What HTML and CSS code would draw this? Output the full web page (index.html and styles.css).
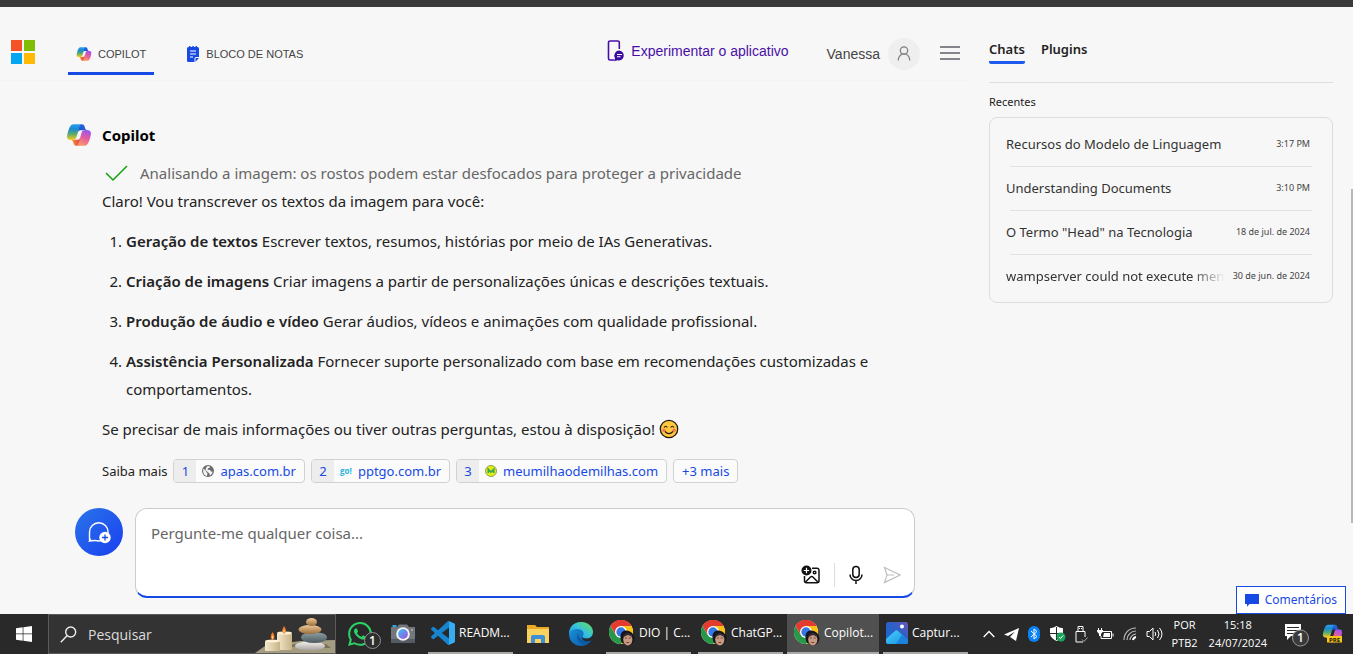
FILE: index.html
```html
<!DOCTYPE html>
<html lang="pt-BR">
<head>
<meta charset="utf-8">
<title>Copilot</title>
<link rel="stylesheet" href="styles.css">
</head>
<body>
<svg class="defs" aria-hidden="true">
  <defs>
    <linearGradient id="cpA" x1="0" y1="0" x2="0" y2="1"><stop offset="0" stop-color="#2b9ff5"/><stop offset=".3" stop-color="#1a8ad0"/><stop offset=".6" stop-color="#52a878"/><stop offset="1" stop-color="#f5cb1c"/></linearGradient>
    <linearGradient id="cpB" x1=".7" y1="0" x2=".3" y2="1"><stop offset="0" stop-color="#9a55f0"/><stop offset=".45" stop-color="#e45ba0"/><stop offset="1" stop-color="#ff9a68"/></linearGradient>
    <linearGradient id="cpC" x1="0" y1="1" x2="1" y2="0"><stop offset="0" stop-color="#1746c8"/><stop offset="1" stop-color="#2b74e8"/></linearGradient>
    <linearGradient id="cpD" x1="0" y1="0" x2="1" y2="0"><stop offset="0" stop-color="#ff9d3c"/><stop offset="1" stop-color="#e0433a"/></linearGradient>
    <linearGradient id="edgeA" x1="0" y1="1" x2="1" y2="0"><stop offset="0" stop-color="#1d86d8"/><stop offset=".5" stop-color="#35c1e0"/><stop offset="1" stop-color="#67e04c"/></linearGradient>
    <linearGradient id="edgeB" x1="0" y1="0" x2="1" y2="1"><stop offset="0" stop-color="#1b9de2"/><stop offset="1" stop-color="#0b4fa0"/></linearGradient>
    <linearGradient id="photoA" x1="0" y1="1" x2="1" y2="0"><stop offset="0" stop-color="#1769d8"/><stop offset=".6" stop-color="#2f5fc4"/><stop offset="1" stop-color="#6a55b8"/></linearGradient>
    <linearGradient id="photoB" x1="0" y1="0" x2="1" y2="1"><stop offset="0" stop-color="#4fd0fb"/><stop offset="1" stop-color="#0f8fe0"/></linearGradient>
    <linearGradient id="lens" x1="0" y1="0" x2="1" y2="1"><stop offset="0" stop-color="#38c3f2"/><stop offset="1" stop-color="#a24be0"/></linearGradient>
    <linearGradient id="wax" x1="0" y1="0" x2="1" y2="0"><stop offset="0" stop-color="#f5e8cc"/><stop offset="1" stop-color="#c8b489"/></linearGradient>
    <linearGradient id="stoneA" x1="0" y1="0" x2="0" y2="1"><stop offset="0" stop-color="#f0c896"/><stop offset="1" stop-color="#9a6f3c"/></linearGradient>
    <linearGradient id="stoneB" x1="0" y1="0" x2="0" y2="1"><stop offset="0" stop-color="#8fa0a4"/><stop offset="1" stop-color="#4c5a5e"/></linearGradient>
    <linearGradient id="stoneC" x1="0" y1="0" x2="0" y2="1"><stop offset="0" stop-color="#f4f2f0"/><stop offset="1" stop-color="#a5a19c"/></linearGradient>
  </defs>
  <symbol id="copilot" viewBox="0 0 48 48">
    <path fill="url(#cpC)" d="M34.142 7.325A4.63 4.63 0 0 0 29.7 4h-1.35a4.63 4.63 0 0 0-4.554 3.794L21.48 20.407l.575-1.965a4.63 4.63 0 0 1 4.444-3.33h7.853l3.294 1.282 3.175-1.283h-.926a4.63 4.63 0 0 1-4.443-3.325z"/>
    <path fill="url(#cpD)" d="M14.33 40.656A4.63 4.63 0 0 0 18.779 44h2.87a4.63 4.63 0 0 0 4.629-4.51l.312-12.163-.654 2.233a4.63 4.63 0 0 1-4.443 3.329h-7.919l-2.823-1.532-3.057 1.532h.912a4.63 4.63 0 0 1 4.447 3.344z"/>
    <path fill="url(#cpA)" d="M29.5 4H13.46c-4.583 0-7.332 6.057-9.165 12.113C2.123 23.29-.72 32.885 7.503 32.885h6.925a4.63 4.63 0 0 0 4.456-3.358 2078 2078 0 0 1 4.971-17.156c.843-2.843 1.544-5.284 2.621-6.805C27.08 4.714 28.086 4 29.5 4z"/>
    <path fill="url(#cpB)" d="M18.498 44h16.04c4.582 0 7.332-6.058 9.165-12.115 2.171-7.177 5.013-16.775-3.208-16.775h-6.926a4.63 4.63 0 0 0-4.455 3.358 2084 2084 0 0 1-4.972 17.16c-.842 2.843-1.544 5.285-2.62 6.806-.604.852-1.61 1.566-3.024 1.566z"/>
  </symbol>
  <symbol id="chrome" viewBox="0 0 26 26">
    <circle cx="12" cy="12" r="12" fill="#fff"/>
    <path fill="#e33b2e" d="M12 12 1.6 6A12 12 0 0 1 22.4 6z"/>
    <path fill="#fbc116" d="M22.4 6A12 12 0 0 1 12 24l5.2-9L12 6z"/>
    <path fill="#279847" d="M1.6 6A12 12 0 0 0 12 24l5.2-9H6.8z"/>
    <path fill="#e33b2e" d="M12 6h10.4A12 12 0 0 0 1.6 6l5.2 9z"/>
    <circle cx="12" cy="12" r="6" fill="#fff"/><circle cx="12" cy="12" r="4.7" fill="#3577e5"/>
    <path fill="#17151c" d="M13 23c-2-4-3-11 3-12.500 6-.5 9 4 9.500 8-.5 4-3 7-7 7z"/>
    <ellipse cx="18.800" cy="19.500" rx="4.600" ry="6" fill="#c99a82"/>
    <path d="M15.900 18h2M19.700 18h2M17.300 22.500h3" stroke="#5b3430" stroke-width=".8"/>
    <path d="M14 18c0-3 2-5 4.500-5 3 1 4 2 4.500 5-1-2-2-2.500-4-3-2 .5-3.500 1-5 3z" fill="#302932"/>
  </symbol>
</svg>

<div class="window-edge"></div>
<div class="page">
  <main class="main">
    <header class="header">
      <a class="ms-logo" href="#" aria-label="Microsoft"><i class="red"></i><i class="green"></i><i class="blue"></i><i class="yellow"></i></a>
      <nav class="nav">
        <a class="nav-item nav-active" href="#"><svg width="16" height="16"><use href="#copilot"/></svg>COPILOT</a>
        <a class="nav-item" href="#"><svg width="14" height="16" viewBox="0 0 14 16"><path fill="#174ae4" d="M2.500 1H3V0h1.500v1h1.800V0h1.500v1h1.800V0H11v1h.5A1.500 1.500 0 0 1 13 2.500V11H10a1.500 1.500 0 0 0-1.500 1.500V16h-6A1.500 1.500 0 0 1 1 14.500v-12A1.500 1.500 0 0 1 2.500 1zM9.500 12.500 10 12h3l-3.500 3.800z"/><path stroke="#fff" stroke-width="1.200" d="M4 5h6M4 8h6M4 11h3"/></svg>BLOCO DE NOTAS</a>
      </nav>
      <a class="try-app" href="#"><svg width="18" height="22" viewBox="0 0 18 22"><path d="M12.300 9V2.500A1.500 1.500 0 0 0 10.800 1H3a1.500 1.500 0 0 0-1.500 1.500v16A1.500 1.500 0 0 0 3 20h4" fill="none" stroke="#4a0fa8" stroke-width="1.600"/><path fill="#3a0ca0" d="M12.400 10.500a5 5 0 1 1-1.900 9.800L7 21.300l1-3.300a5 5 0 0 1 4.400-7.500z"/><path stroke="#fff" stroke-width="1.100" d="M10 14.500h5M10 16.800h3.500"/></svg>Experimentar o aplicativo</a>
      <button class="account" type="button">Vanessa<span class="avatar"><svg width="14" height="15" viewBox="0 0 14 15" fill="none" stroke="#7c7c80" stroke-width="1.200"><circle cx="7" cy="4.500" r="3.700"/><path d="M1.200 14.500C1.400 10.600 3.700 8.800 5 8l4 0c1.500.8 3.600 2.800 3.800 6.500"/></svg></span></button>
      <button class="menu" type="button" aria-label="Menu"><i></i><i></i><i></i></button>
    </header>

    <section class="chat">
      <h1 class="author"><svg width="26" height="26"><use href="#copilot"/></svg>Copilot</h1>
      <div class="message">
        <p class="status"><svg width="24" height="18" viewBox="0 0 24 18"><path d="m2 9 7 7L23 2" fill="none" stroke="#13a10e" stroke-width="1.500"/></svg>Analisando a imagem: os rostos podem estar desfocados para proteger a privacidade</p>
        <p>Claro! Vou transcrever os textos da imagem para você:</p>
        <ol class="answer-list">
          <li><strong>Geração de textos</strong> Escrever textos, resumos, histórias por meio de IAs Generativas.</li>
          <li><strong>Criação de imagens</strong> Criar imagens a partir de personalizações únicas e descrições textuais.</li>
          <li><strong>Produção de áudio e vídeo</strong> Gerar áudios, vídeos e animações com qualidade profissional.</li>
          <li><strong>Assistência Personalizada</strong> Fornecer suporte personalizado com base em recomendações customizadas e comportamentos.</li>
        </ol>
        <p>Se precisar de mais informações ou tiver outras perguntas, estou à disposição! <svg class="emoji" width="20" height="20" viewBox="0 0 20 20"><circle cx="10" cy="10" r="8.700" fill="#ffc83d" stroke="#201a10" stroke-width="1.300"/><circle cx="4.900" cy="11.300" r="1.700" fill="#f07a4a"/><circle cx="15.100" cy="11.300" r="1.700" fill="#f07a4a"/><path d="M5 8.500q1.700-2.500 3.400 0M11.600 8.500q1.700-2.500 3.400 0M6 12.500q4 4.200 8 0" fill="none" stroke="#201a10" stroke-width="1.200"/></svg></p>
        <div class="sources">
          <span>Saiba mais</span>
          <a class="source" href="#"><b class="num">1</b><svg width="12" height="12" viewBox="0 0 12 12"><circle cx="6" cy="6" r="6" fill="#6b6b6f"/><path fill="#f5f5f5" d="M1.300 3.500 4 6v1l1.500 1-.5 3C2 10.700.8 8 1.300 3.500zM5.500 1l2 .2.500 1.300-2 .8-.5 1.400L8 5l1 1.500 1.700.3C10 9 9 10.300 7.800 10.600L7.500 8.500 5 6.500 3.500 5 4 3z"/></svg><span>apas.com.br</span></a>
          <a class="source" href="#"><b class="num">2</b><i class="go">go!</i><span>pptgo.com.br</span></a>
          <a class="source" href="#"><b class="num">3</b><svg width="12" height="12" viewBox="0 0 12 12"><circle cx="6" cy="6" r="5.500" fill="#e2ee14" stroke="#93a24c"/><path d="M3.300 8V4.300L6 7l2.700-2.700V8" fill="none" stroke="#35a853" stroke-width="1.700"/></svg><span>meumilhaodemilhas.com</span></a>
          <button class="source more" type="button">+3 mais</button>
        </div>
      </div>

      <form class="composer">
        <button class="new-topic" type="button" aria-label="Novo tópico"><svg width="24" height="24" viewBox="0 0 24 24"><path d="M2.500 20.500V12a9.300 9.300 0 1 1 18.600 0c0 5-4 9-9 9-3.600-.8-5.500-.7-9.600 0l1.200-2.500" fill="none" stroke="#fff" stroke-width="1.400"/><circle cx="18" cy="17.500" r="5.700" fill="#fff"/><path d="M18 14.500v6M15 17.500h6" stroke="#174ae4" stroke-width="1.300"/></svg></button>
        <div class="box">
          <textarea class="prompt" aria-label="Mensagem" placeholder="Pergunte-me qualquer coisa..."></textarea>
          <div class="tools">
            <button type="button" aria-label="Adicionar imagem"><svg width="20" height="20" viewBox="0 0 20 20" fill="none" stroke="#111" stroke-width="1.500"><path d="M11 3.200h5A2 2 0 0 1 18 5.200v10.600a2 2 0 0 1-2 2H5.500a2 2 0 0 1-2-2V11"/><path d="m4.500 17 5-5q1.200-1 2.400 0l5 5"/><circle cx="13.600" cy="7.500" r="1.300"/><circle cx="5.500" cy="5.500" r="5" fill="#111" stroke="none"/><path d="M5.500 2.800v5.400M2.800 5.500h5.400" stroke="#fff" stroke-width="1.200"/></svg></button>
            <span class="rule"></span>
            <button type="button" aria-label="Usar microfone"><svg width="16" height="20" viewBox="0 0 16 20" fill="none" stroke="#111" stroke-width="1.500"><rect x="4.800" y="1.500" width="6.400" height="11" rx="3.200"/><path d="M2 9.500a6 6 0 0 0 12 0M8 15.500V19"/></svg></button>
            <button type="submit" aria-label="Enviar"><svg width="18" height="18" viewBox="0 0 18 18" fill="none" stroke="#bdbdbd" stroke-width="1.200"><path d="m1.500 1.500 15.500 7.500L1.500 16.500 4 9zM4 9h7"/></svg></button>
          </div>
        </div>
      </form>
    </section>
  </main>

  <aside class="side">
    <nav class="tabs"><a class="tab tab-active" href="#">Chats</a><a class="tab" href="#">Plugins</a></nav>
    <h2 class="recent-title">Recentes</h2>
    <ul class="recent">
      <li><a href="#"><span>Recursos do Modelo de Linguagem</span><time>3:17 PM</time></a></li>
      <li><a href="#"><span>Understanding Documents</span><time>3:10 PM</time></a></li>
      <li><a href="#"><span>O Termo "Head" na Tecnologia</span><time>18 de jul. de 2024</time></a></li>
      <li><a href="#"><span class="fade">wampserver could not execute men</span><time>30 de jun. de 2024</time></a></li>
    </ul>
  </aside>
  <button class="feedback" type="button"><svg width="14" height="13" viewBox="0 0 14 13"><path fill="#174ae4" d="M0 0h14v10H4.500L2 12.800V10H0z"/></svg>Comentários</button>
  <div class="scroll-thumb"></div>
</div>

<footer class="taskbar">
  <button class="start" type="button" aria-label="Iniciar"><svg width="16" height="16" viewBox="0 0 16 16" fill="#fff"><path d="M0 2.200 6.700 1.300v6.300H0zM7.400 1.200 16 0v7.600H7.400zM0 8.300h6.700v6.400L0 13.800zM7.400 8.300H16V16l-8.600-1.200z"/></svg></button>
  <label class="search">
    <svg width="17" height="17" viewBox="0 0 17 17" fill="none" stroke="#eee" stroke-width="1.400"><circle cx="10.700" cy="6" r="5"/><path d="M7 9.800.8 16.200"/></svg>
    <input type="text" placeholder="Pesquisar">
    <svg width="80" height="38" viewBox="0 0 80 38">
      <path fill="#a39c80" d="M0 38 10 31l35-5 35-1v13z"/><path fill="#5d5743" d="M22 34q16-4 34-1l20 0-5-4H40z" opacity=".6"/>
      <rect x="22" y="18" width="15" height="17" rx="1" fill="url(#wax)"/><ellipse cx="29.500" cy="18" rx="7.500" ry="1.600" fill="#fff1d6"/>
      <rect x="10" y="26" width="15" height="10" rx="1" fill="url(#wax)"/><ellipse cx="17.500" cy="26" rx="7.500" ry="1.500" fill="#fff1d6"/>
      <path fill="#f47a25" d="M29 11q4 5 0 8-3.500-3 0-8zM17.500 17q4 5 0 8-3.500-3 0-8z"/><path fill="#ffd38a" d="M29 14q1.500 3 0 4-1.500-1 0-4zM17.500 20q1.500 3 0 4-1.500-1 0-4z"/>
      <ellipse cx="55" cy="31" rx="15" ry="4.500" fill="url(#stoneC)"/><ellipse cx="59" cy="22.500" rx="13" ry="5.500" fill="url(#stoneB)"/><ellipse cx="55" cy="14.500" rx="11.500" ry="4.500" fill="url(#stoneA)"/><ellipse cx="56.500" cy="7" rx="5.500" ry="4" fill="url(#stoneA)"/>
    </svg>
  </label>
  <div class="apps">
    <button class="app badged" type="button" aria-label="WhatsApp"><svg width="34" height="30" viewBox="0 0 34 30"><path fill="#2bd366" transform="translate(0 3)" d="M17.472 14.382c-.297-.149-1.758-.867-2.030-.967-.273-.099-.471-.148-.67.15-.197.297-.767.966-.94 1.164-.173.199-.347.223-.644.075-.297-.15-1.255-.463-2.390-1.475-.883-.788-1.480-1.761-1.653-2.059-.173-.297-.018-.458.13-.606.134-.133.298-.347.446-.52.149-.174.198-.298.298-.497.099-.198.05-.371-.025-.52-.075-.149-.669-1.612-.916-2.207-.242-.579-.487-.5-.669-.51-.173-.008-.371-.01-.57-.01-.198 0-.52.074-.792.372-.272.297-1.040 1.016-1.040 2.479 0 1.462 1.065 2.875 1.213 3.074.149.198 2.096 3.200 5.077 4.487.709.306 1.262.489 1.694.625.712.227 1.360.195 1.871.118.571-.085 1.758-.719 2.006-1.413.248-.694.248-1.289.173-1.413-.074-.124-.272-.198-.57-.347m-5.421 7.403h-.004a9.870 9.870 0 01-5.031-1.378l-.361-.214-3.741.982.998-3.648-.235-.374a9.860 9.860 0 01-1.510-5.260c.001-5.450 4.436-9.884 9.888-9.884 2.640 0 5.122 1.030 6.988 2.898a9.825 9.825 0 012.893 6.994c-.003 5.450-4.437 9.884-9.885 9.884m8.413-18.297A11.815 11.815 0 0012.050 0C5.495 0 .16 5.335.157 11.892c0 2.096.547 4.142 1.588 5.945L.057 24l6.305-1.654a11.882 11.882 0 005.683 1.448h.005c6.554 0 11.890-5.335 11.893-11.893a11.821 11.821 0 00-3.480-8.413z"/><circle cx="24.500" cy="21.500" r="8" fill="#2e2e2e" stroke="#8d8d8d"/><text class="badge" x="24.500" y="26" text-anchor="middle">1</text></svg></button>
    <button class="app" type="button" aria-label="Câmera"><svg width="24" height="20" viewBox="0 0 24 20"><path fill="#72777d" d="M0 3h6l2-2.500h8L18 3h6v16H0z"/><path fill="#555b62" d="M0 15h24v4H0z"/><path fill="#28a8ea" d="M1.500 1h4v2h-4z"/><circle cx="12" cy="10" r="6.800" fill="#f5f5f5"/><circle cx="12" cy="10" r="4.900" fill="url(#lens)"/><circle cx="21" cy="6" r=".8" fill="#ddd"/></svg></button>
    <button class="app wide open" type="button"><svg width="24" height="24" viewBox="0 0 24 24"><path fill="#1684cf" d="M23.150 2.587L18.210.21a1.494 1.494 0 0 0-1.705.29l-9.460 8.630-4.120-3.128a.999.999 0 0 0-1.276.057L.327 7.261A1 1 0 0 0 .326 8.740L3.899 12 .326 15.260a1 1 0 0 0 .001 1.479L1.650 17.940a.999.999 0 0 0 1.276.057l4.120-3.128 9.460 8.630a1.492 1.492 0 0 0 1.704.29l4.942-2.377A1.500 1.500 0 0 0 24 20.060V3.939a1.500 1.500 0 0 0-.85-1.352zm-5.146 14.861L10.826 12l7.178-5.448v10.896z"/><path fill="#35adf0" d="m18 .3 5.200 2.300q.8.500.8 1.400v16q0 1-.8 1.400L18 23.700z"/></svg><span>READM...</span></button>
    <button class="app" type="button" aria-label="Explorador de Arquivos"><svg width="22" height="20" viewBox="0 0 22 20"><path fill="#e9a825" d="M0 1h8l2 2h12v6H0z"/><path fill="#fbd260" d="M0 5h22v14H0z"/><path fill="#3d8fd6" d="M4 19v-6q0-2 2-2h10q2 0 2 2v6h-4v-4H8v4z"/></svg></button>
    <button class="app" type="button" aria-label="Edge"><svg width="24" height="24" viewBox="0 0 24 24"><circle cx="12" cy="12" r="12" fill="url(#edgeB)"/><path fill="url(#edgeA)" d="M0 12C0 4 6 0 12 0c7 0 12 4.500 12 10 0 4-3 6.500-6.500 6.500-3 0-5-1.200-3.500-3 1.800-2.500-.5-6.500-5-6.500C4.500 7 1 9 0 12z"/><path fill="#0c59a4" d="M9 11c-3 6 2 12 9 11 2-.8 3.500-2 4.500-4-5 2.500-13 1-13.500-7z"/><path fill="#292929" d="M24 10.500c0 4-3 6-6.500 6-3 0-5-1.200-3.500-3-2 2.500 0 5.800 4 5.800 2 0 3.500-.6 4.700-1.300L24 18z"/></svg></button>
    <button class="app wide open" type="button"><svg width="26" height="26"><use href="#chrome"/></svg><span>DIO | C...</span></button>
    <button class="app wide open" type="button"><svg width="26" height="26"><use href="#chrome"/></svg><span>ChatGP...</span></button>
    <button class="app wide open current" type="button"><svg width="26" height="26"><use href="#chrome"/></svg><span>Copilot...</span></button>
    <button class="app wide open" type="button"><svg width="22" height="22" viewBox="0 0 22 22"><rect width="22" height="22" rx="2.500" fill="url(#photoA)"/><path fill="url(#photoB)" d="m0 17 9-8q1.500-1.300 3 0l10 9v1.500q0 2.500-2.500 2.500h-17Q0 22 0 19.500z"/><path fill="#1c83dc" d="m10 22 6-9 6 5v2q0 2-2 2z"/><circle cx="16" cy="4.500" r="2" fill="#fff"/></svg><span>Captur...</span></button>
  </div>
  <div class="tray">
    <svg width="12" height="8" viewBox="0 0 12 8"><path d="m.7 7 5.300-5.500L11.300 7" fill="none" stroke="#fff" stroke-width="1.300"/></svg>
    <svg width="15" height="13" viewBox="0 0 15 13"><path fill="#fff" d="M15 0 0 6.500l4 1.500 7-4.500L6 9l6 4z"/></svg>
    <svg width="12" height="16" viewBox="0 0 12 16"><rect width="12" height="16" rx="6" fill="#0a82f5"/><path d="m3 5 6 5.500L6 13V3l3 2.500L3 11" fill="none" stroke="#fff"/></svg>
    <svg width="17" height="16" viewBox="0 0 17 16"><path fill="#fff" d="M7.500 0Q10 2 14 2.300V8q-1.500 4.500-6.500 7Q1.500 12 1 8V2.300Q5 2 7.500 0z"/><path stroke="#292929" d="M7.500 1v13M1 7.500h13"/><circle cx="12" cy="11" r="4.500" fill="#19a35b"/><path d="m10 11 1.500 1.500 2.700-3" fill="none" stroke="#fff"/></svg>
    <svg width="13" height="17" viewBox="0 0 13 17" fill="none" stroke="#fff"><path d="M3 5.500v-5h5v5M8 16H1V5.500h9V11M4.500 2v1M6.500 2v1"/><path d="m7 13.500 2 2 3.500-4" stroke="#aaa"/></svg>
    <svg width="17" height="13" viewBox="0 0 17 13"><path d="M5.500 3.500h9v7H4V8" fill="none" stroke="#fff"/><path fill="#fff" d="M7 5h6v4H6zM15.500 5.500h1v3h-1zM1 0h1v2H1zM4 0h1v2H4zM0 2h6v1.500L4 6v2H2V6L0 3.500z"/></svg>
    <svg width="14" height="14" viewBox="0 0 14 14" fill="none" stroke="#bbb" stroke-width="1.200"><path d="M1 13C1 6 6 1 13 1M4 13c0-5 4-9 9-9M7 13c0-3 3-6 6-6"/><path d="M10 13q.5-2.500 3-3" stroke="#fff" stroke-width="2"/></svg>
    <svg width="17" height="14" viewBox="0 0 17 14" fill="none" stroke="#fff"><path d="M1 4.500h2.500L7 1v12L3.500 9.500H1zM9 5q1.500 2 0 4M11.500 3q3 4 0 8M13.500 1q5 6 0 12"/></svg>
    <div class="stack lang"><span>POR</span><span>PTB2</span></div>
    <div class="stack clock"><span>15:18</span><span>24/07/2024</span></div>
    <svg class="notice" width="26" height="26" viewBox="0 0 26 26"><path fill="#fff" d="M1 3h16v12H7l-4 4v-4H1z"/><path stroke="#292929" d="M3 6.500h12M3 9.500h12M3 12.500h9"/><circle cx="16.500" cy="17" r="8" fill="#3a3a3a" stroke="#999"/><text class="badge" x="16.500" y="21" text-anchor="middle">1</text></svg>
    <svg width="21" height="22" viewBox="0 0 21 22"><use href="#copilot" width="21" height="21"/><rect x="5" y="13" width="15" height="6.500" fill="#f5c518"/><text class="pre" x="12.500" y="18.500" text-anchor="middle">PRE</text></svg>
  </div>
</footer>
</body>
</html>
```

FILE: styles.css
```css
* { box-sizing: border-box; }
body {
  margin: 0;
  min-height: 100vh;
  display: flex;
  flex-direction: column;
  padding-bottom: 2px;
  background: #fff;
  color: #222;
  font: 15px/28px "Noto Sans", "Open Sans", sans-serif;
}
button { margin: 0; padding: 0; border: 0; background: none; font: inherit; color: inherit; }
a { color: inherit; text-decoration: none; }
p, h1, h2, ul, ol { margin: 0; padding: 0; }
svg { flex: none; }
.defs { position: absolute; width: 0; height: 0; }

.window-edge { height: 7px; background: #3a3a3a; }
.page { position: relative; flex: 1; display: flex; background: #f7f7f7; }
.main { flex: 1; min-width: 0; }

.header {
  display: flex;
  align-items: center;
  height: 74px;
  padding: 0 9px 0 11px;
  border-bottom: 1px solid #f4f4f4;
  font-family: "Liberation Sans", Arial, sans-serif;
  line-height: 20px;
}
.ms-logo { display: grid; grid-template-columns: 11px 11px; grid-auto-rows: 11px; gap: 2px; margin: 16px 33px 0 0; }
.red { background: #f35325; }
.green { background: #81bc06; }
.blue { background: #05a6f0; }
.yellow { background: #ffba08; }
.nav { display: flex; gap: 24px; align-self: flex-end; margin-bottom: 5px; font-size: 11px; color: #444; }
.nav-item { display: flex; align-items: center; gap: 6px; height: 40px; padding: 0 8px; border-bottom: 3px solid transparent; }
.nav-active { border-color: #174ae4; }
.try-app { display: flex; align-items: center; gap: 6px; margin: 15px 38px 0 auto; color: #4a0fa8; font-size: 14px; }
.account { display: flex; align-items: center; gap: 8px; margin: 20px 20px 0 0; color: #444; font-size: 14px; }
.avatar { display: grid; place-items: center; width: 32px; height: 32px; border-radius: 50%; background: #efefef; }
.menu { display: grid; gap: 4px; width: 20px; margin-top: 18px; }
.menu i { height: 2px; background: #84848a; }

.chat { padding: 40px 54px 16px 66px; }
.author { display: flex; align-items: center; gap: 10px; color: #000; font-size: 15px; font-weight: 700; }
.message { padding: 10px 0 0 36px; }
.status { display: flex; align-items: center; gap: 12px; padding-left: 2px; color: #666; }
.answer-list { display: grid; gap: 12px; padding: 12px 0 12px 24px; }
.answer-list strong { font-weight: 600; }
.emoji { vertical-align: -4px; }
.sources { display: flex; align-items: center; gap: 6px; margin-top: 16px; font-size: 13px; line-height: 22px; }
.source { display: flex; align-items: center; gap: 6px; height: 24px; padding-right: 8px; overflow: hidden; border: 1px solid #d1d1d1; border-radius: 4px; background: #fbfbfb; color: #174ae4; }
.num { width: 22px; background: #ededed; font-weight: 400; text-align: center; }
.go { width: 12px; color: #2bb4de; font: 700 8px/12px "Open Sans", sans-serif; text-align: center; }
.more { padding-left: 8px; }

.composer { display: flex; gap: 12px; margin: 25px 0 0 9px; }
.new-topic { display: grid; place-items: center; flex: none; width: 48px; height: 48px; border-radius: 50%; background: linear-gradient(135deg, #2870ea 10%, #1b44ef 90%); }
.box { flex: 1; min-width: 0; height: 90px; display: flex; flex-direction: column; overflow: hidden; border: 1px solid #ccc; border-bottom: 2px solid #174ae4; border-radius: 12px; background: #fff; }
.prompt { flex: 1; width: 100%; min-height: 0; padding: 10px 15px 0; border: 0; outline: 0; resize: none; background: none; font: inherit; }
.prompt::placeholder { color: #666; opacity: 1; }
.tools { display: flex; align-items: center; justify-content: flex-end; gap: 13px; padding: 0 13px 8px; }
.tools button { display: grid; place-items: center; height: 26px; }
.tools button:last-child { margin-left: 6px; }
.rule { width: 1px; height: 24px; background: #dedede; }

.side { flex: none; width: 384px; padding: 28px 20px 0; font-size: 13px; }
.tabs { display: flex; gap: 16px; height: 48px; border-bottom: 1px solid #ddd; font-weight: 600; line-height: 28px; }
.tab { height: 29px; }
.tab-active { border-bottom: 3px solid #1d5bee; border-radius: 0 0 2px 2px; }
.recent-title { padding: 8px 0 4px; font-size: 11px; font-weight: 400; line-height: 22px; }
.recent { padding: 4px 20px 4px 16px; border: 1px solid #ddd; border-radius: 8px; list-style: none; }
.recent a { display: flex; align-items: center; gap: 8px; height: 44px; padding-right: 2px; color: #333; }
.recent li + li { background: linear-gradient(#e2e2e2, #e2e2e2) 4px 0 / 100% 1px no-repeat; }
.recent span { flex: 1; overflow: hidden; white-space: nowrap; }
.fade { -webkit-mask-image: linear-gradient(90deg, #000 85%, transparent); mask-image: linear-gradient(90deg, #000 85%, transparent); }
.recent time { font-size: 9px; color: #444; }
.feedback { position: absolute; right: 7px; bottom: 0; display: flex; align-items: center; gap: 6px; height: 28px; padding: 0 8px; border: 1px solid #174ae4; background: #fff; color: #174ae4; font-size: 12px; }
.scroll-thumb { position: absolute; right: 0; top: 30%; width: 2px; height: 55%; background: #b8b8b8; }

.taskbar { display: flex; height: 40px; background: #292929; color: #fff; font: 11px/18px "Open Sans", sans-serif; }
.start { flex: none; width: 48px; display: grid; place-items: center; }
.search { display: flex; align-items: center; flex: none; width: 288px; padding-left: 11px; border: 1px solid #5b5b5b; background: #333; }
.search input { flex: 1; min-width: 0; padding: 0 0 0 11px; border: 0; outline: 0; background: none; color: #fff; font: 14px "Open Sans", sans-serif; }
.search input::placeholder { color: #ddd; opacity: 1; }
.apps { display: flex; gap: 7px; padding-left: 6px; }
.app { display: grid; place-items: center; width: 36px; white-space: nowrap; }
.app.badged { justify-items: start; padding-left: 6px; }
.app.wide { display: flex; align-items: center; gap: 4px; width: 85px; padding-left: 3px; font-size: 12px; }
.app.open { border-bottom: 2px solid #aaa9a5; }
.app.current { width: 92px; margin: 0 -3px; padding-left: 7px; background: #505050; }
.tray { display: flex; align-items: center; gap: 9px; margin-left: auto; padding-right: 10px; }
.stack { display: grid; text-align: center; }
.lang { margin-right: 2px; }
.clock { margin-right: 8px; }
.notice { margin-right: 3px; }
.badge { fill: #fff; font: 600 12px "Open Sans", sans-serif; }
.pre { fill: #111; font: 700 6px "Open Sans", sans-serif; }
```
